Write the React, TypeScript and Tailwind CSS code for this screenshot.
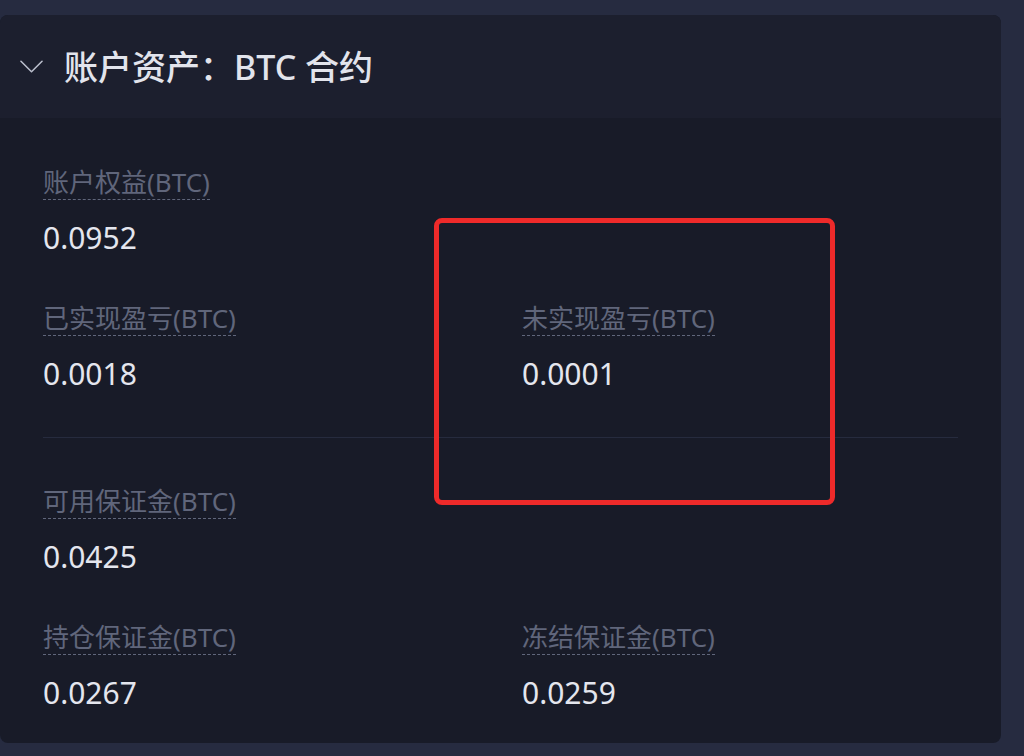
// AccountAssets — collapsible panel showing BTC contract account balances.
// Two-column grid of labelled values, split by a divider.

const FONT = { fontFamily: '"Noto Sans", "Noto Sans CJK SC", sans-serif' };

type Item = { label: string; value: string };

function Stat({ label, value }: Item) {
  return (
    <div className="flex flex-col items-start">
      <span className="text-[26px] leading-[34px] text-[#60667b] border-b border-dashed border-[#60667b]">
        {label}
      </span>
      <span className="mt-[20px] text-[30px] leading-[36px] text-[#e4e6ee]">{value}</span>
    </div>
  );
}

function StatGrid({ rows }: { rows: Array<Array<Item | null>> }) {
  return (
    <div className="grid grid-cols-[479px_1fr] gap-y-[45px]">
      {rows.flatMap((row, i) =>
        row.map((item, j) =>
          item ? <Stat key={`${i}-${j}`} {...item} /> : <div key={`${i}-${j}`} />
        )
      )}
    </div>
  );
}

export default function App() {
  const top: Array<Array<Item | null>> = [
    [{ label: "账户权益(BTC)", value: "0.0952" }, null],
    [
      { label: "已实现盈亏(BTC)", value: "0.0018" },
      { label: "未实现盈亏(BTC)", value: "0.0001" },
    ],
  ];
  const bottom: Array<Array<Item | null>> = [
    [{ label: "可用保证金(BTC)", value: "0.0425" }, null],
    [
      { label: "持仓保证金(BTC)", value: "0.0267" },
      { label: "冻结保证金(BTC)", value: "0.0259" },
    ],
  ];

  return (
    <div className="min-h-[756px] bg-[#262b40] pt-[15px]" style={FONT}>
      <div className="relative w-[1001px] h-[728px] rounded-[8px] bg-[#181b28] overflow-hidden">
        {/* Header */}
        <div className="flex items-center h-[103px] pl-[20px] bg-[#1c1f2e]">
          <svg width="23" height="13" viewBox="0 0 24 13" fill="none" stroke="#b9bdcb" strokeWidth={1.6}>
            <path d="M1 1 L12 12 L23 1" strokeLinecap="round" strokeLinejoin="round" />
          </svg>
          <h2 className="ml-[21px] text-[34px] leading-none font-medium text-[#e2e4ec]">
            账户资产：BTC 合约
          </h2>
        </div>

        {/* Body */}
        <div className="px-[43px] pt-[47px] pb-[32px]">
          <StatGrid rows={top} />
          <div className="mt-[45px] mb-[46px] h-px bg-[#262b3e]" />
          <StatGrid rows={bottom} />
        </div>

        {/* Annotation box */}
        <div className="absolute left-[434px] top-[203px] w-[401px] h-[287px] rounded-[8px] border-[5px] border-[#ee2a2a]" />
      </div>
    </div>
  );
}
